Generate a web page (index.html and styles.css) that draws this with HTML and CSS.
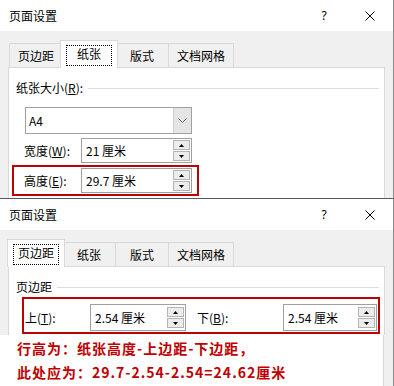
FILE: index.html
```html
<!DOCTYPE html>
<html lang="zh-CN">
<head>
    <meta charset="UTF-8">
    <meta name="viewport" content="width=device-width, initial-scale=1.0">
    <title>页面设置 - 行高计算</title>
    <link rel="stylesheet" href="styles.css">
</head>
<body>
    <!-- 纸张 tab -->
    <div class="dialog dialog-paper">
        <div class="titlebar">
            <span class="title">页面设置</span>
            <span class="caption-btn help">?</span>
            <span class="caption-btn">
                <svg width="10" height="10" viewBox="0 0 10 10"><path d="M0.5 0.5 L9.5 9.5 M9.5 0.5 L0.5 9.5" stroke="#000" stroke-width="1" fill="none"/></svg>
            </span>
        </div>
        <div class="dialog-body">
            <div class="tabs">
                <div class="tab">页边距</div>
                <div class="tab active">纸张</div>
                <div class="tab">版式</div>
                <div class="tab">文档网格</div>
            </div>
            <div class="panel">
                <div class="group-label"><span>纸张大小(<u>R</u>):</span></div>
                <div class="select">
                    <span class="select-value">A4</span>
                    <span class="select-btn">
                        <svg width="9" height="5" viewBox="0 0 9 5"><polyline points="0.5,0.5 4.5,4.5 8.5,0.5" stroke="#606060" stroke-width="1" fill="none"/></svg>
                    </span>
                </div>
                <div class="field-row">
                    <span class="field-label">宽度(<u>W</u>):</span>
                    <div class="spin-input">
                        <span class="spin-value">21 厘米</span>
                        <div class="spinner">
                            <span class="spin-btn"><svg width="5" height="3" viewBox="0 0 5 3"><polygon points="0,3 2.5,0 5,3" fill="#000"/></svg></span>
                            <span class="spin-btn"><svg width="5" height="3" viewBox="0 0 5 3"><polygon points="0,0 5,0 2.5,3" fill="#000"/></svg></span>
                        </div>
                    </div>
                </div>
                <div class="field-row highlight">
                    <span class="field-label">高度(<u>E</u>):</span>
                    <div class="spin-input">
                        <span class="spin-value">29.7 厘米</span>
                        <div class="spinner">
                            <span class="spin-btn"><svg width="5" height="3" viewBox="0 0 5 3"><polygon points="0,3 2.5,0 5,3" fill="#000"/></svg></span>
                            <span class="spin-btn"><svg width="5" height="3" viewBox="0 0 5 3"><polygon points="0,0 5,0 2.5,3" fill="#000"/></svg></span>
                        </div>
                    </div>
                </div>
            </div>
        </div>
    </div>

    <!-- 页边距 tab -->
    <div class="dialog dialog-margins">
        <div class="titlebar">
            <span class="title">页面设置</span>
            <span class="caption-btn help">?</span>
            <span class="caption-btn">
                <svg width="10" height="10" viewBox="0 0 10 10"><path d="M0.5 0.5 L9.5 9.5 M9.5 0.5 L0.5 9.5" stroke="#000" stroke-width="1" fill="none"/></svg>
            </span>
        </div>
        <div class="dialog-body">
            <div class="tabs">
                <div class="tab active">页边距</div>
                <div class="tab">纸张</div>
                <div class="tab">版式</div>
                <div class="tab">文档网格</div>
            </div>
            <div class="panel">
                <div class="group-label"><span>页边距</span></div>
                <div class="margin-row">
                    <span class="margin-label">上(<u>T</u>):</span>
                    <div class="spin-input top-input">
                        <span class="spin-value">2.54 厘米</span>
                        <div class="spinner">
                            <span class="spin-btn"><svg width="5" height="3" viewBox="0 0 5 3"><polygon points="0,3 2.5,0 5,3" fill="#000"/></svg></span>
                            <span class="spin-btn"><svg width="5" height="3" viewBox="0 0 5 3"><polygon points="0,0 5,0 2.5,3" fill="#000"/></svg></span>
                        </div>
                    </div>
                    <span class="margin-label second">下(<u>B</u>):</span>
                    <div class="spin-input bottom-input">
                        <span class="spin-value">2.54 厘米</span>
                        <div class="spinner">
                            <span class="spin-btn"><svg width="5" height="3" viewBox="0 0 5 3"><polygon points="0,3 2.5,0 5,3" fill="#000"/></svg></span>
                            <span class="spin-btn"><svg width="5" height="3" viewBox="0 0 5 3"><polygon points="0,0 5,0 2.5,3" fill="#000"/></svg></span>
                        </div>
                    </div>
                </div>
            </div>
        </div>
    </div>

    <div class="note">
        <div class="note-text">
            <p>行高为：纸张高度-上边距-下边距，</p>
            <p>此处应为：29.7-2.54-2.54=24.62厘米</p>
        </div>
        <div class="note-edge"></div>
    </div>
</body>
</html>
```

FILE: styles.css
```css
:root {
    --dialog-bg: #f0f0f0;
    --tab-border: #d9d9d9;
    --input-border: #a0a0a0;
    --mark-red: #c00000;
}

* {
    margin: 0;
    padding: 0;
    box-sizing: border-box;
}

body {
    width: 394px;
    height: 386px;
    overflow: hidden;
    background-color: #fff;
    font-family: "Noto Sans CJK SC", sans-serif;
    font-size: 12px;
    line-height: 16px;
    color: #000;
}

u {
    text-decoration-thickness: 1px;
    text-underline-offset: 1px;
}

.dialog {
    background-color: var(--dialog-bg);
    border-right: 1px solid #8a8a8a;
    overflow: hidden;
}

.dialog-paper {
    height: 199px;
    border-bottom: 1px solid #5a5a5a;
}

.dialog-margins {
    height: 136px;
}

.titlebar {
    display: flex;
    align-items: center;
    height: 31px;
    background-color: #fff;
}

.title {
    padding-left: 9px;
    margin-right: auto;
}

.caption-btn {
    display: flex;
    align-items: center;
    justify-content: center;
    width: 46px;
    height: 31px;
}

.caption-btn.help {
    font-family: "Noto Sans", sans-serif;
    font-size: 12px;
}

.dialog-body {
    padding: 9px 8px 0 8px;
}

/* tabs */
.tabs {
    display: flex;
    align-items: flex-end;
    margin-left: 1px;
}

.tab {
    display: flex;
    align-items: center;
    justify-content: center;
    height: 24px;
    min-width: 54px;
    padding: 0 8px;
    background-color: var(--dialog-bg);
    border: 1px solid var(--tab-border);
    border-bottom: 0;
}

.tab + .tab {
    margin-left: -1px;
}

.tab.active {
    position: relative;
    z-index: 1;
    height: 28px;
    min-width: 58px;
    padding: 0 10px 2px;
    margin: 0 -2px -1px -2px;
    background-color: #fff;
}

.tab + .tab.active {
    margin-left: -3px;
}

.tab.active::after {
    content: '';
    position: absolute;
    top: 4px;
    left: 5px;
    right: 5px;
    bottom: 2px;
    border: 1px dotted #000;
}

.panel {
    height: 200px;
    background-color: #fff;
    border: 1px solid var(--tab-border);
    padding: 12px 5px 0 7px;
}

.group-label {
    display: flex;
    align-items: center;
}

.group-label::after {
    content: '';
    flex: 1;
    height: 1px;
    margin-left: 5px;
    background-color: #dcdcdc;
}

/* combo box */
.select {
    display: flex;
    align-items: center;
    width: 167px;
    height: 27px;
    margin: 11px 0 0 9px;
    border: 1px solid var(--input-border);
    padding-left: 3px;
}

.select-value {
    margin-right: auto;
}

.select-btn {
    display: flex;
    align-items: center;
    justify-content: center;
    width: 18px;
    height: 100%;
    background-color: #e5e5e5;
    border-left: 1px solid #d0d0d0;
}

/* spin boxes */
.field-row {
    display: flex;
    align-items: center;
    margin: 4px 0 0 8px;
}

.field-label {
    width: 57px;
}

.spin-input {
    display: flex;
    align-items: center;
    width: 111px;
    height: 25px;
    padding-left: 4px;
    background-color: #fff;
    border: 1px solid var(--input-border);
}

.spin-value {
    margin-right: auto;
}

.spinner {
    display: flex;
    flex-direction: column;
    gap: 1px;
    width: 17px;
    margin-right: 1px;
}

.spin-btn {
    display: flex;
    align-items: center;
    justify-content: center;
    height: 10px;
    background-color: #ececec;
    border: 1px solid #b4b4b4;
}

.field-row.highlight {
    width: 187px;
    margin: 2px 0 0 -4px;
    padding: 1px 5px 1px 10px;
    border: 2px solid var(--mark-red);
}

/* margins row */
.margin-row {
    display: flex;
    align-items: center;
    width: 358px;
    margin: 2px 0 0 6px;
    padding: 5px 1px 1px 1px;
    border: 2px solid var(--mark-red);
}

.margin-label {
    width: 65px;
}

.margin-label.second {
    width: 86px;
    margin-left: 11px;
}

.margin-row .spin-input {
    height: 27px;
}

.top-input {
    width: 96px;
}

.bottom-input {
    width: 94px;
}

/* explanation */
.note {
    display: flex;
    height: 51px;
}

.note-text {
    flex: 1;
    padding: 1px 0 0 17px;
    background-color: #fff;
    color: var(--mark-red);
    font-size: 14px;
    font-weight: bold;
    line-height: 24px;
    letter-spacing: 1px;
}

.note-edge {
    width: 11px;
    background-color: var(--dialog-bg);
    border-left: 1px solid var(--tab-border);
    border-right: 1px solid #8a8a8a;
}
```
